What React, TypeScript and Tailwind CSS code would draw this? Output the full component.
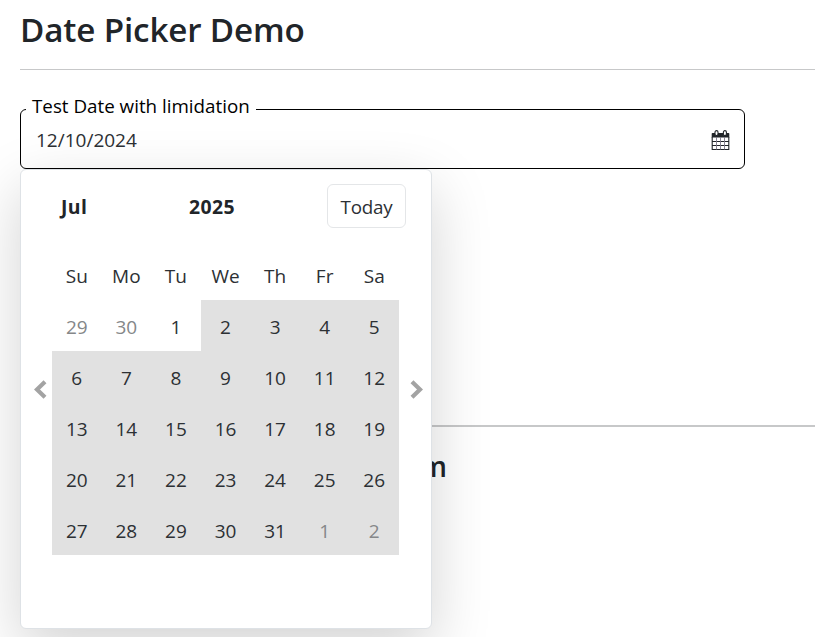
import React from "react";

const weekdays = ["Su", "Mo", "Tu", "We", "Th", "Fr", "Sa"];

const days = [
  29, 30, ...Array.from({ length: 31 }, (_, i) => i + 1), 1, 2,
];

function CalendarIcon() {
  return (
    <svg width="20" height="21" viewBox="0 0 20 21" fill="none" className="block">
      <path d="M1.500 3h16a.8.8 0 0 1 .8.8V7.500H.7V3.800a.8.8 0 0 1 .8-.8z" fill="#212529" />
      <path d="M1.200 7v12.500h16.600V7" stroke="#212529" strokeWidth="1.100" />
      <path d="M1 11.500h17M1 15.500h17" stroke="#212529" strokeWidth="1" />
      <path d="M5.500 7v12.500M9.500 7v12.500M13.500 7v12.500" stroke="#7d7889" strokeWidth="0.900" />
      <rect x="4" y="0.600" width="3" height="5" rx="1.500" fill="#fff" stroke="#212529" strokeWidth="1.100" />
      <rect x="12.400" y="0.600" width="3" height="5" rx="1.500" fill="#fff" stroke="#212529" strokeWidth="1.100" />
    </svg>
  );
}

function Chevron({ right = false }: { right?: boolean }) {
  return (
    <svg width="13" height="19" viewBox="0 0 13 19" fill="none" className={right ? "block rotate-180" : "block"}>
      <path d="M11 1.800 3 9.500l8 7.700" stroke="#a3a3a3" strokeWidth="4.200" />
    </svg>
  );
}

function DatePicker() {
  return (
    <div className="absolute left-0 top-[60px] z-10 h-[460px] w-[412px] rounded-[6px] border border-[#dee2e6] bg-white shadow-[0_20px_60px_rgba(0,0,0,0.175)]">
      <div className="flex h-[79px] items-start pt-[14px]">
        <div className="w-[168px] pl-[40px] text-[19.4px] leading-[46px] font-bold tracking-[0.4px]">Jul</div>
        <div className="w-[138px] text-[19.4px] leading-[46px] font-bold tracking-[0.4px]">2025</div>
        <button className="h-[44px] w-[79px] rounded-[6px] border border-[#e4e6e8] text-[18.8px] leading-[44px] tracking-[-0.2px] text-[#2c3034]">
          Today
        </button>
      </div>
      <div className="flex items-center text-[#2c3034]">
        <div className="flex w-[31px] justify-center pl-[7px] pb-[26px]">
          <Chevron />
        </div>
        <div className="-mt-px grid w-[347px] grid-cols-7 pt-px text-center text-[19px]">
          {weekdays.map((label) => (
            <div key={label} className="h-[51px] leading-[55px]">{label}</div>
          ))}
          {days.map((n, i) => (
            <div
              key={i}
              className={`h-[51px] leading-[55px] ${i >= 3 ? "bg-[#e1e1e1]" : ""} ${i < 2 || i > 32 ? "text-[#858789]" : ""}`}
            >
              {n}
            </div>
          ))}
        </div>
        <div className="flex w-[32px] justify-center pl-[3px] pb-[26px]">
          <Chevron right />
        </div>
      </div>
    </div>
  );
}

export default function App() {
  return (
    <main className="h-[637px] w-full overflow-hidden bg-white pl-5 font-['Open_Sans','Noto_Sans',sans-serif] text-[#212529]">
      <h1 className="h-[69px] pt-[6px] text-[33.2px] leading-[48px] font-semibold tracking-[-0.15px]">Date Picker Demo</h1>
      <hr className="border-[#c7c8c9]" />
      <div className="relative mt-[39px] h-[60px] w-[725px] rounded-[6px] border border-black">
        <label className="absolute left-[5px] -top-[18px] w-[230px] bg-white pl-[6px] text-[18.8px] leading-[28px] whitespace-nowrap text-black">
          Test Date with limidation
        </label>
        <div className="flex h-full items-center justify-between pl-[15px] pr-[13px]">
          <span className="pt-[2px] text-[19px] text-[#2c3034]">12/10/2024</span>
          <div className="pt-[3px]"><CalendarIcon /></div>
        </div>
        <div className="absolute -left-px -top-px"><DatePicker /></div>
      </div>
      <hr className="mt-[256px] border-t-2 border-[#c7c8c9]" />
      <h2 className="mt-[18px] w-[427px] text-right text-[28px] leading-[42px] font-semibold">m</h2>
    </main>
  );
}
